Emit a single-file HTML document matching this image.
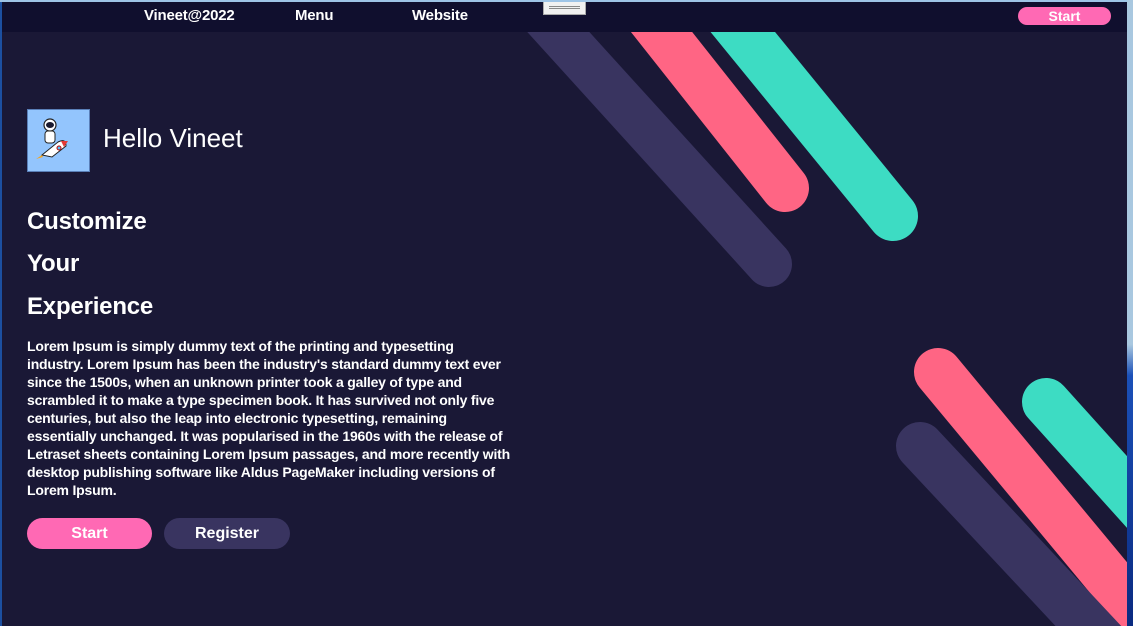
<!DOCTYPE html>
<html><head><style>
*{margin:0;padding:0;box-sizing:border-box}
html,body{width:1133px;height:626px;overflow:hidden;background:#1c4fa0;font-family:"Liberation Sans",sans-serif;color:#fff}
#main{position:absolute;left:2px;top:2px;width:1125px;height:624px;background:#1a1836;overflow:hidden}
#top{position:absolute;left:0;top:0;width:1133px;height:2px;background:#9ec4e6}
#rs{position:absolute;left:1127px;top:0;width:6px;height:626px;background:linear-gradient(#a9c8e0 0,#a9c8e0 55%,#1b50b8 60%,#0a2a80 100%)}
nav{position:absolute;left:0;top:0;width:1125px;height:30px;background:#100f2e}
nav span{position:absolute;top:5px;font-size:15px;font-weight:bold;letter-spacing:-0.2px}
.btn{position:absolute;border-radius:16px;text-align:center;font-weight:bold}
svg.bg{position:absolute;left:0;top:0}
h1{position:absolute;font-size:26px;font-weight:normal;letter-spacing:0px}
h2{position:absolute;left:25px;font-size:24px;font-weight:bold;letter-spacing:-0.2px}
p{position:absolute;left:25px;top:335px;font-size:14px;font-weight:bold;line-height:18px;white-space:nowrap;letter-spacing:-0.2px}
</style></head><body>
<div id="top"></div>
<div id="main">
<svg class="bg" width="1125" height="624" viewBox="0 0 1125 624">
<g stroke-linecap="round" fill="none">
<line x1="520" y1="-10" x2="767" y2="262" stroke="#393460" stroke-width="46"/>
<line x1="620" y1="-20" x2="783" y2="186" stroke="#ff6584" stroke-width="48"/>
<line x1="700" y1="-20" x2="891" y2="214" stroke="#3ddcc3" stroke-width="50"/>
<line x1="936" y1="370" x2="1160" y2="640" stroke="#ff6584" stroke-width="48"/>
<line x1="1044" y1="400" x2="1170" y2="540" stroke="#3ddcc3" stroke-width="48"/>
<line x1="918" y1="444" x2="1120" y2="660" stroke="#393460" stroke-width="48"/>
</g>
</svg>
<nav>
<span style="left:142px">Vineet@2022</span>
<span style="left:293px">Menu</span>
<span style="left:410px">Website</span>
<div style="position:absolute;left:541px;top:-2px;width:43px;height:15px;background:#f0f0f0;border:1px solid #aaa"><div style="margin:5px 5px 0;height:3px;border-top:1px solid #888;border-bottom:1px solid #888"></div></div>
<div class="btn" style="left:1016px;top:5px;width:93px;height:18px;background:#ff69b4;font-size:14px;line-height:18px;border-radius:9px">Start</div>
</nav>
<div style="position:absolute;left:25px;top:107px;width:63px;height:63px;background:#93c5fd;border:1px solid #5a7fb8;overflow:hidden">
<svg width="61" height="61" viewBox="0 0 61 61" style="display:block">
<circle cx="22" cy="15" r="6" fill="#fff" stroke="#222" stroke-width="1.2"/>
<ellipse cx="22" cy="15" rx="4" ry="3" fill="#1a1a2e"/>
<rect x="17" y="21" width="10" height="12" rx="3" fill="#fff" stroke="#222"/>
<path d="M14 45 L30 32 Q38 28 38 36 L24 47 Z" fill="#fff" stroke="#222"/>
<circle cx="31" cy="38" r="2" fill="#4fc3f7" stroke="#c00"/>
<path d="M14 45 L8 49 L15 47 Z" fill="#f5a623"/>
<path d="M33 31 L40 31 L36 37Z" fill="#e53935"/>
</svg></div>
<h1 style="left:101px;top:121px">Hello Vineet</h1>
<h2 style="top:206px">Customize</h2>
<h2 style="top:248px">Your</h2>
<h2 style="top:291px">Experience</h2>
<p>Lorem Ipsum is simply dummy text of the printing and typesetting<br>industry. Lorem Ipsum has been the industry's standard dummy text ever<br>since the 1500s, when an unknown printer took a galley of type and<br>scrambled it to make a type specimen book. It has survived not only five<br>centuries, but also the leap into electronic typesetting, remaining<br>essentially unchanged. It was popularised in the 1960s with the release of<br>Letraset sheets containing Lorem Ipsum passages, and more recently with<br>desktop publishing software like Aldus PageMaker including versions of<br>Lorem Ipsum.</p>
<div class="btn" style="left:25px;top:516px;width:125px;height:31px;background:#ff69b4;font-size:16px;line-height:31px">Start</div>
<div class="btn" style="left:162px;top:516px;width:126px;height:31px;background:#393460;font-size:16px;line-height:31px">Register</div>
</div>
<div id="rs"></div>
</body></html>
